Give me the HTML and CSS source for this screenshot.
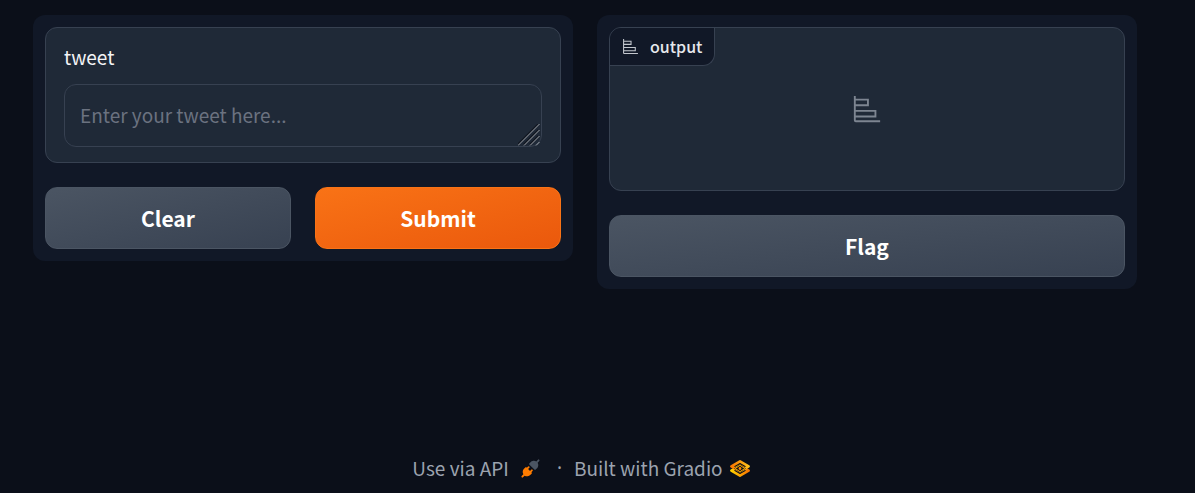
FILE: index.html
```
<!DOCTYPE html>
<html lang="en">
<head>
<meta charset="utf-8">
<meta name="viewport" content="width=device-width, initial-scale=1">
<title>Gradio</title>
<link rel="stylesheet" href="styles.css">
</head>
<body>
<div class="app">
  <main class="row">
    <section class="panel">
      <div class="block field">
        <label class="field-label" for="tweet">tweet</label>
        <div class="input-wrap">
          <textarea class="input" id="tweet" rows="1" placeholder="Enter your tweet here..."></textarea>
          <svg class="grip" viewBox="0 0 22 22" aria-hidden="true">
            <path class="grip-shade" d="M0 20.500 20.500 0M6 20.500 20.500 6M12 20.500 20.500 12"/>
            <path class="grip-line" d="M0 21.500 21.500 0M6 21.500 21.500 6M12 21.500 21.500 12M18 21.500 21.500 18"/>
          </svg>
        </div>
      </div>
      <div class="buttons">
        <button class="btn" type="button">Clear</button>
        <button class="btn btn-primary" type="button">Submit</button>
      </div>
    </section>
    <section class="panel">
      <div class="block output">
        <div class="output-label">
          <svg class="icon-small" viewBox="0 0 32 32" aria-hidden="true"><path fill="currentColor" d="M4 2H2v26a2 2 0 0 0 2 2h26v-2H4v-3h22v-8H4v-4h14V5H4Zm20 17v4H4v-4ZM16 7v4H4V7Z"/></svg>
          <span>output</span>
        </div>
        <svg class="icon-large" viewBox="0 0 32 32" aria-hidden="true"><path fill="currentColor" d="M4 2H2v26a2 2 0 0 0 2 2h26v-2H4v-3h22v-8H4v-4h14V5H4Zm20 17v4H4v-4ZM16 7v4H4V7Z"/></svg>
      </div>
      <div class="buttons">
        <button class="btn" type="button">Flag</button>
      </div>
    </section>
  </main>
  <footer class="footer">
    <a class="footer-link api" href="#api">Use via API
      <svg class="plug" viewBox="0 0 28 28" aria-hidden="true">
        <path fill="#4b5563" d="M26.900 2.900A1.330 1.330 0 0 0 25 1L22.600 3.500c-1.500-.9-3-1.100-4.400-.9-1.700.3-3.100 1.100-3.800 1.800l-2 2a1.330 1.330 0 0 0 0 1.900l7.300 7.300a1.330 1.330 0 0 0 1.900 0l2-2c.7-.7 1.500-2.100 1.800-3.800.2-1.300 0-2.900-.9-4.400Z"/>
        <path fill="#ff7c00" d="M12.300 12.900a1.330 1.330 0 0 0-1.900-1.900l-1.800 1.800-.3-.4a1.330 1.330 0 0 0-1.900 0l-2 2c-.7.7-1.500 2.200-1.800 3.800-.2 1.400 0 2.900.9 4.400L1 25.100A1.330 1.330 0 0 0 2.900 27l2.500-2.500c1.500.9 3 1.100 4.400.9 1.600-.3 3.100-1.100 3.800-1.800l2-2a1.330 1.330 0 0 0 0-1.900l-.4-.3 1.800-1.800a1.330 1.330 0 0 0-1.900-1.900l-1.800 1.800-2.800-2.800Z"/>
      </svg>
    </a>
    <span class="dot">·</span>
    <a class="footer-link gradio" href="#gradio">Built with Gradio
      <svg class="logo" viewBox="0 0 20 17" aria-hidden="true">
        <defs>
          <linearGradient id="top" x1="0" y1="0" x2="1" y2="0"><stop offset="0" stop-color="#f97700"/><stop offset="1" stop-color="#ffc21a"/></linearGradient>
          <linearGradient id="bottom" x1="0" y1="0" x2="1" y2="0"><stop offset="0" stop-color="#ffd000"/><stop offset="1" stop-color="#f97700"/></linearGradient>
        </defs>
        <path fill="none" stroke="url(#bottom)" stroke-width="2.600" stroke-linejoin="round" d="M10 5.600 1.400 10.700 10 15.600 18.600 10.700Z"/>
        <path fill="none" stroke="url(#top)" stroke-width="2.600" stroke-linejoin="round" d="M10 11.400 1.400 6.300 10 1.400 18.600 6.300Z"/>
        <path fill="#0b0f19" d="M10 4.200 15.800 8.500 10 12.800 4.200 8.500Z"/>
        <path fill="none" stroke="#ffae00" stroke-width="1" d="M10 5.300 14.800 8.500 10 11.700 5.200 8.500Z"/>
        <circle fill="#ff8a00" cx="10" cy="8.500" r="1.400"/>
      </svg>
    </a>
  </footer>
</div>
</body>
</html>
```
FILE: styles.css
```
* {
  box-sizing: border-box;
}

body {
  margin: 0;
  background: #0b0f19;
  color: #f3f4f6;
  font-family: "Noto Sans CJK SC", "Noto Sans", sans-serif;
  font-size: 19px;
  line-height: 28px;
}

.app {
  display: flex;
  flex-direction: column;
  justify-content: space-between;
  min-height: 100vh;
  padding: 15px 58px 11px 33px;
}

.row {
  display: grid;
  grid-template-columns: 1fr 1fr;
  align-items: start;
  gap: 24px;
}

.panel {
  display: flex;
  flex-direction: column;
  gap: 24px;
  padding: 12px;
  border-radius: 12px;
  background: #111827;
}

.block {
  border: 1px solid #374151;
  border-radius: 12px;
  background: #1f2937;
  overflow: hidden;
}

.field {
  display: flex;
  flex-direction: column;
  gap: 13px;
  padding: 15px 18px;
}

.input-wrap {
  position: relative;
  display: flex;
}

.input {
  width: 100%;
  height: 63px;
  padding: 16px 15px;
  border: 1px solid #374151;
  border-radius: 12px;
  background: #1f2937;
  color: #f3f4f6;
  font: inherit;
  resize: none;
  overflow: hidden;
}

.input::placeholder {
  color: #6b7280;
  opacity: 1;
}

.grip {
  position: absolute;
  right: 2px;
  bottom: 1px;
  width: 22px;
  height: 22px;
  border-bottom-right-radius: 4px;
  pointer-events: none;
}

.grip-line,
.grip-shade {
  fill: none;
  stroke: #a3a8af;
}

.grip-shade {
  stroke: #111620;
  stroke-width: 2;
}

.output {
  display: flex;
  flex-direction: column;
  align-items: center;
  height: 164px;
}

.output-label {
  display: flex;
  align-items: center;
  align-self: flex-start;
  gap: 11px;
  height: 38px;
  padding: 0 12px 1px;
  border: solid #374151;
  border-width: 0 1px 1px 0;
  border-bottom-right-radius: 12px;
  background: #111827;
  color: #e5e7eb;
  font-size: 16px;
  font-weight: 500;
}

.icon-small {
  width: 17px;
  height: 17px;
  color: #c3c7ce;
}

.icon-large {
  width: 30px;
  height: 30px;
  margin-top: 28px;
  color: #7d8591;
}

.buttons {
  display: flex;
  gap: 24px;
}

.btn {
  flex: 1;
  height: 62px;
  padding: 0 24px;
  border: 1px solid #4b5563;
  border-radius: 12px;
  background: linear-gradient(to bottom right, #4b5563, #374151) border-box;
  color: #fff;
  font: inherit;
  font-size: 21px;
  font-weight: 700;
  cursor: pointer;
}

.btn-primary {
  border-color: #f97316;
  background: linear-gradient(to bottom right, #f97316, #ea580c) border-box;
}

.footer {
  display: flex;
  justify-content: center;
  gap: 12px;
  padding-right: 8px;
  color: #9ca3af;
}

.footer-link {
  display: flex;
  align-items: center;
  gap: 12px;
  color: inherit;
  text-decoration: none;
}

.api {
  padding-right: 5px;
}

.dot {
  font-family: "Noto Sans", sans-serif;
}

.gradio {
  gap: 7px;
}

.plug {
  width: 19px;
  height: 19px;
}

.logo {
  width: 20px;
  height: 17px;
}
```
